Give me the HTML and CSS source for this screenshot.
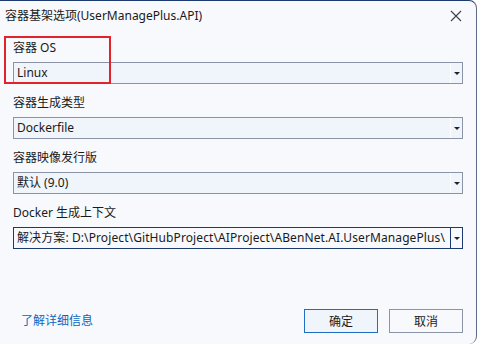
FILE: index.html
```html
<!DOCTYPE html>
<html lang="zh-CN">
<head>
  <meta charset="UTF-8">
  <title>容器基架选项</title>
  <link rel="stylesheet" href="styles.css">
</head>
<body>
<div class="dialog">
  <div class="titlebar">
    <span class="title">容器基架选项(UserManagePlus.API)</span>
    <svg class="close" width="12" height="12" viewBox="0 0 12 12">
      <path d="M1 1 L11 11 M11 1 L1 11" stroke="#3a3f4a" stroke-width="1.1" fill="none"/>
    </svg>
  </div>

  <div class="content">
    <div class="field">
      <label>容器 OS</label>
      <div class="combo">
        <span class="value">Linux</span>
        <span class="drop"><i></i></span>
      </div>
    </div>
    <div class="field">
      <label>容器生成类型</label>
      <div class="combo">
        <span class="value">Dockerfile</span>
        <span class="drop"><i></i></span>
      </div>
    </div>
    <div class="field">
      <label>容器映像发行版</label>
      <div class="combo">
        <span class="value">默认 (9.0)</span>
        <span class="drop"><i></i></span>
      </div>
    </div>
    <div class="field">
      <label>Docker 生成上下文</label>
      <div class="combo focused">
        <span class="value path">解决方案: D:\Project\GitHubProject\AIProject\ABenNet.AI.UserManagePlus\</span>
        <span class="drop"><i></i></span>
      </div>
    </div>
  </div>

  <div class="footer">
    <a href="#" class="more">了解详细信息</a>
    <div class="buttons">
      <button class="btn primary">确定</button>
      <button class="btn">取消</button>
    </div>
  </div>

  <!-- highlight annotation -->
  <div class="highlight"></div>
</div>
</body>
</html>
```

FILE: styles.css
```css
body {
    margin: 0;
    background-color: #ffffff;
    font-family: "Noto Sans", "Noto Sans CJK SC", sans-serif;
    font-size: 12px;
    color: #1a1a1a;
}
.dialog {
    position: relative;
    width: 477px;
    height: 344px;
    box-sizing: border-box;
    background-color: #f7f9fd;
    border-top: 1px solid #1d3a70;
    border-right: 1px solid #5b6a86;
    border-radius: 0 8px 8px 0;
    display: flex;
    flex-direction: column;
    overflow: hidden;
}
.titlebar {
    height: 29px;
    display: flex;
    align-items: center;
    justify-content: space-between;
    padding: 0 14px 0 5px;
}
.title {
    line-height: 16px;
}
.content {
    padding: 10px 13px 0 13px;
    display: flex;
    flex-direction: column;
    gap: 11px;
}
.field label {
    display: block;
    line-height: 16px;
    margin-bottom: 6px;
}
.combo {
    height: 22px;
    box-sizing: border-box;
    border: 1px solid #8a94a6;
    background-color: #f0f4fb;
    display: flex;
    align-items: center;
}
.combo .value {
    flex: 1;
    padding-left: 3px;
    white-space: nowrap;
    overflow: hidden;
    line-height: 20px;
}
.combo .value.path {
    letter-spacing: 0.1px;
}
.combo .drop {
    width: 11px;
    height: 20px;
    border-left: 1px solid #ffffff;
    display: flex;
    align-items: center;
    justify-content: center;
}
.combo .drop i {
    width: 0;
    height: 0;
    border-left: 3px solid transparent;
    border-right: 3px solid transparent;
    border-top: 3px solid #222222;
}
.combo.focused {
    border-color: #1d3a70;
    background-color: #f7f9fd;
}
.combo.focused .drop {
    border-left-color: #1d3a70;
}
.footer {
    margin-top: auto;
    padding: 0 13px 11px 21px;
    display: flex;
    align-items: center;
    justify-content: space-between;
}
.more {
    color: #0a66c2;
    text-decoration: none;
    line-height: 16px;
}
.buttons {
    display: flex;
    gap: 11px;
}
.btn {
    width: 74px;
    height: 24px;
    border: 1px solid #8a94a6;
    background-color: #f7f9fd;
    font-family: inherit;
    font-size: 12px;
    color: #1a1a1a;
    padding: 0;
}
.btn.primary {
    border-color: #1f6ec4;
    background-color: #f0f4fb;
}
.highlight {
    position: absolute;
    left: 4px;
    top: 35px;
    width: 103px;
    height: 44px;
    border: 2px solid #e3232b;
}
```
